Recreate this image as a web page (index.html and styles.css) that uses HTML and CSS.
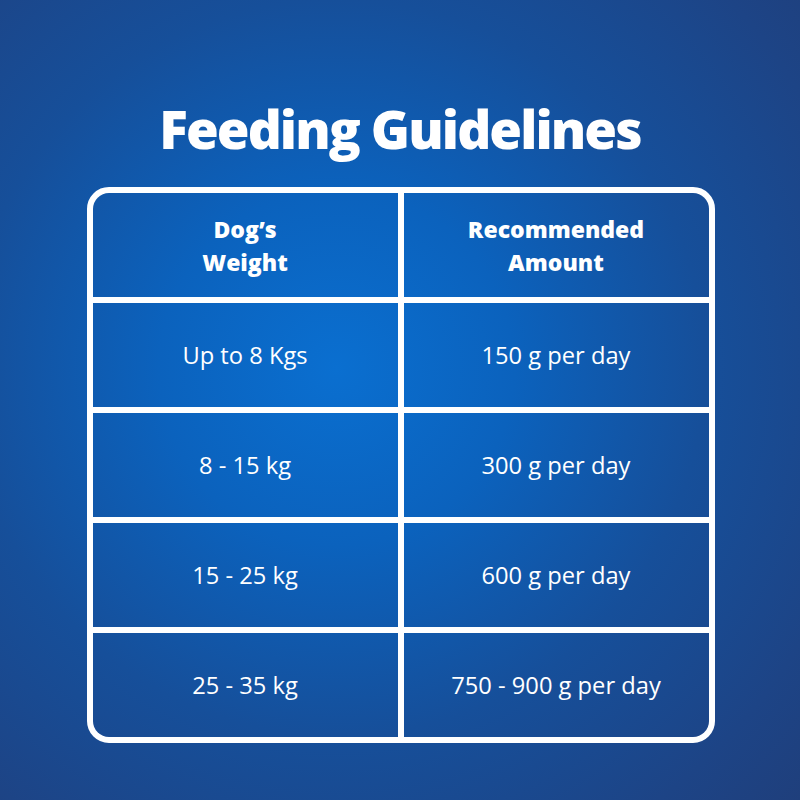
FILE: index.html
```html
<!DOCTYPE html>
<html lang="en">
<head>
<meta charset="utf-8">
<title>Feeding Guidelines</title>
<link rel="stylesheet" href="styles.css">
</head>
<body>
<main class="page">
  <h1 class="title">Feeding Guidelines</h1>
  <div class="table">
    <div class="cell head">Dog’s<br>Weight</div>
    <div class="cell head">Recommended<br>Amount</div>
    <div class="cell">Up to 8 Kgs</div>
    <div class="cell">150 g per day</div>
    <div class="cell">8 - 15 kg</div>
    <div class="cell">300 g per day</div>
    <div class="cell">15 - 25 kg</div>
    <div class="cell">600 g per day</div>
    <div class="cell">25 - 35 kg</div>
    <div class="cell">750 - 900 g per day</div>
  </div>
</main>
</body>
</html>
```

FILE: styles.css
```css
html, body {
  margin: 0;
  padding: 0;
  width: 800px;
  height: 800px;
  overflow: hidden;
}

body {
  background: radial-gradient(circle at 42% 46%, #0a6fd0 0%, #0b62bd 28%, #164f9a 58%, #1d4486 85%, #1f3f7c 100%) fixed;
  font-family: "Open Sans", "Liberation Sans", sans-serif;
  color: #fff;
}

.page {
  display: flex;
  flex-direction: column;
  align-items: center;
  padding-top: 97px;
}

.title {
  margin: 0 0 26px;
  font-size: 53px;
  line-height: 64px;
  font-weight: 800;
  letter-spacing: -1.9px;
}

.table {
  width: 616px;
  border: 6px solid #fff;
  border-radius: 22px;
  overflow: hidden;
  display: grid;
  grid-template-columns: 1fr 1fr;
  grid-auto-rows: 104px;
  gap: 6px;
  background: #fff;
  margin-left: 1px;
}

.cell {
  background: radial-gradient(circle at 42% 46%, #0a6fd0 0%, #0b62bd 28%, #164f9a 58%, #1d4486 85%, #1f3f7c 100%) fixed;
  display: flex;
  align-items: center;
  justify-content: center;
  text-align: center;
  font-size: 23.7px;
  font-weight: 400;
}

.head {
  font-size: 23px;
  font-weight: 800;
  line-height: 33px;
  padding-top: 2px;
}
```
